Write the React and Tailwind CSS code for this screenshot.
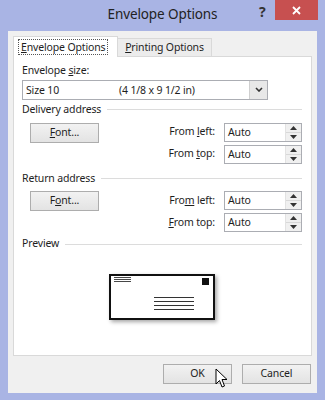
import React from 'react';

const font = { fontFamily: '"Noto Sans", "Open Sans", sans-serif' };

function Spin() {
  return (
    <div className="flex w-[16px] flex-col border-l border-[#e2e2e2] bg-[#f0f0f0]">
      <div className="flex flex-1 items-center justify-center border-b border-[#d8d8d8]">
        <svg width="7" height="4" viewBox="0 0 7 4"><path d="M0 4 L3.5 0 L7 4 Z" fill="#333" /></svg>
      </div>
      <div className="flex flex-1 items-center justify-center">
        <svg width="7" height="4" viewBox="0 0 7 4"><path d="M0 0 L3.5 4 L7 0 Z" fill="#333" /></svg>
      </div>
    </div>
  );
}

function NumField({ label }) {
  return (
    <div className="flex items-center justify-end gap-[9px]">
      <span>{label}</span>
      <div className="flex h-[19px] w-[78px] border border-[#abadb3] bg-white">
        <span className="flex-1 pl-[3px] leading-[17px]">Auto</span>
        <Spin />
      </div>
    </div>
  );
}

function Btn({ children, className = '' }) {
  return (
    <div className={`flex h-[20px] w-[69px] items-center justify-center border border-[#adadad] bg-gradient-to-b from-[#f2f2f2] to-[#e3e3e3] ${className}`}>
      {children}
    </div>
  );
}

function Group({ title, fontKey, left, top }) {
  return (
    <div>
      <div className="flex items-center gap-[6px]">
        <span>{title}</span>
        <div className="h-px flex-1 bg-[#dcdcdc]" />
      </div>
      <div className="mt-[5px] flex justify-between pl-[8px]">
        <Btn>{fontKey}</Btn>
        <div className="flex flex-col gap-[3px]">
          <NumField label={left} />
          <NumField label={top} />
        </div>
      </div>
    </div>
  );
}

export default function App() {
  return (
    <div className="relative h-[400px] w-[325px] overflow-hidden bg-[#a9b4e4] text-[10.5px] tracking-[-0.15px] text-[#1e1e1e]" style={font}>
      {/* title bar */}
      <div className="relative flex h-[31px] items-center justify-center">
        <span className="mb-[3px] text-[13.5px] tracking-[-0.1px] text-[#222]">Envelope Options</span>
        <span className="absolute left-[259px] top-[1px] text-[14px] font-bold text-[#333]">?</span>
        <div className="absolute left-[275px] top-0 flex h-[20px] w-[43px] items-center justify-center bg-[#c75050]">
          <svg width="9" height="9" viewBox="0 0 9 9"><path d="M1 1 L8 8 M8 1 L1 8" stroke="#fff" strokeWidth="1.8" /></svg>
        </div>
      </div>

      {/* body */}
      <div className="ml-[8px] flex h-[362px] w-[309px] flex-col bg-[#f0f0f0] px-[5px] pt-[5px]">
        {/* tabs */}
        <div className="flex items-end">
          <div className="relative z-10 -mb-px flex h-[21px] w-[105px] items-start whitespace-nowrap border border-b-0 border-[#d9d9d9] bg-white px-[4px] pt-[2px]">
            <span className="border border-dotted border-[#555] px-[2px] leading-[14px]"><u>E</u>nvelope Options</span>
          </div>
          <div className="flex h-[18px] w-[94px] items-center justify-center whitespace-nowrap border border-b-0 border-l-0 border-[#d9d9d9] bg-[#ececec]">
            <span><u>P</u>rinting Options</span>
          </div>
        </div>

        {/* panel */}
        <div className="flex h-[300px] flex-col border border-[#d9d9d9] bg-white px-[8px] pt-[6px]">
          <div>Envelope <u>s</u>ize:</div>
          <div className="mt-[1px] flex h-[20px] w-[246px] border border-[#abadb3] bg-white">
            <span className="w-[96px] pl-[3px] leading-[18px]">Size 10</span>
            <span className="flex-1 leading-[18px]">(4 1/8 x 9 1/2 in)</span>
            <div className="flex w-[18px] items-center justify-center border-l border-[#cfcfcf] bg-[#e8e8e8]">
              <svg width="8" height="5" viewBox="0 0 8 5"><path d="M1 1 L4 4 L7 1" stroke="#333" strokeWidth="1.6" fill="none" /></svg>
            </div>
          </div>

          <div className="mt-[2px] flex flex-col gap-[7px] pr-[1px]">
            <Group title="Delivery address" fontKey={<span><u>F</u>ont...</span>} left={<span>From <u>l</u>eft:</span>} top={<span>From <u>t</u>op:</span>} />
            <Group title="Return address" fontKey={<span>F<u>o</u>nt...</span>} left={<span>Fro<u>m</u> left:</span>} top={<span><u>F</u>rom top:</span>} />
          </div>

          <div className="mt-[4px] flex items-center gap-[6px] pr-[1px]">
            <span>Preview</span>
            <div className="h-px flex-1 bg-[#dcdcdc]" />
          </div>

          {/* envelope preview */}
          <div className="mt-[22px] flex justify-center pr-[2px]">
            <div className="h-[46px] w-[106px] border-2 border-[#111] bg-white shadow-[2px_2px_4px_rgba(0,0,0,0.35)]">
              <svg width="102" height="42" viewBox="0 0 102 42">
                <path d="M3 1.5 H20 M3 3.5 H20 M3 5.5 H20" stroke="#333" strokeWidth="0.9" />
                <rect x="91" y="2" width="7" height="7" fill="#111" />
                <path d="M43 21.5 H83 M43 25.5 H83 M43 29.5 H83 M43 33.5 H83" stroke="#333" strokeWidth="1" />
              </svg>
            </div>
          </div>
        </div>

        {/* buttons */}
        <div className="mt-[8px] flex justify-end gap-[10px] pr-[1px]">
          <Btn className="border-[#7eb4ea] from-[#ebf4fc] to-[#dcecfc]">OK</Btn>
          <Btn>Cancel</Btn>
        </div>
      </div>

      {/* mouse pointer */}
      <svg className="absolute left-[215px] top-[368px]" width="14" height="21" viewBox="0 0 14 21">
        <path d="M1 1 L1 16 L4.5 12.5 L7 19 L9.5 18 L7 11.5 L12 11.5 Z" fill="#fff" stroke="#000" strokeWidth="1" strokeLinejoin="round" />
      </svg>
    </div>
  );
}
